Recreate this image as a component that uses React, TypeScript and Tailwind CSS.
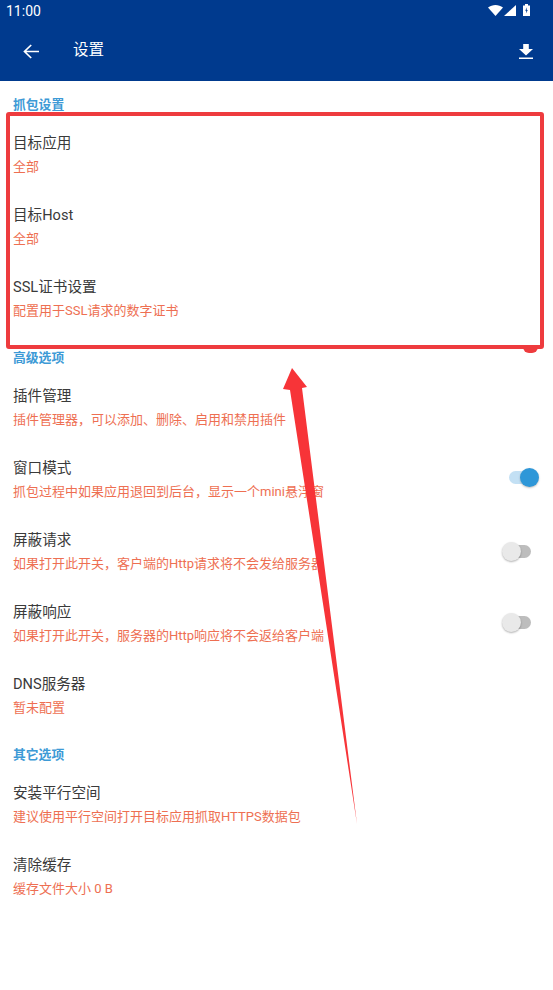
function Toggle({ on }: { on: boolean }) {
    return on ? (
        <div className="relative h-[13px] w-[21px] rounded-full bg-[#c3e0f4]">
            <div className="absolute -right-[9px] -top-[3px] size-[19px] rounded-full bg-[#2e97d8] shadow-[0_1px_2px_rgba(0,0,0,0.25)]"></div>
        </div>
    ) : (
        <div className="relative h-[13px] w-[26px] rounded-full bg-[#bdbdbd]">
            <div className="absolute -left-[3px] -top-[3px] size-[19px] rounded-full bg-[#e9e9e9] shadow-[0_1px_2px_rgba(0,0,0,0.3)]"></div>
        </div>
    )
}

function Row({ title, sub, toggle, toggleClass }: { title: string; sub: string; toggle?: boolean; toggleClass?: string }) {
    return (
        <div className="flex h-[72px] items-center justify-between pl-[13px]">
            <div className="flex flex-col self-start pt-[12px]">
                <div className="h-[24px] text-[14.6px] leading-[24px] text-[#3a3a3a]">{title}</div>
                <div className="h-[24px] text-[13px] leading-[24px] text-[#ee6f52]">{sub}</div>
            </div>
            {toggle !== undefined && (
                <div className={toggleClass}>
                    <Toggle on={toggle} />
                </div>
            )}
        </div>
    )
}

function SectionTitle({ text, className }: { text: string; className: string }) {
    return <div className={`pl-[13px] text-[12.8px] font-bold leading-[28px] text-[#3d9ad6] ${className}`}>{text}</div>
}

export default function App() {
    return (
        <div className="relative h-[990px] w-[553px] overflow-hidden bg-white font-['Roboto','Noto_Sans_CJK_SC',sans-serif]">
            {/* status bar + toolbar */}
            <div className="h-[81px] bg-[#003a8e] text-white">
                <div className="flex h-[20px] items-center justify-between pl-[6px] pr-[23px]">
                    <span className="pt-[2px] text-[14px] leading-[20px]">11:00</span>
                    <div className="flex items-center">
                        <svg width="15" height="11" viewBox="0 0 15 11" fill="white">
                            <path d="M0 2.600C2.200.9 4.800 0 7.500 0s5.300.9 7.500 2.600L7.500 11z" />
                        </svg>
                        <svg width="12" height="11" viewBox="0 0 12 11" fill="white" className="ml-[1px]">
                            <path d="M12 0v11H0z" />
                        </svg>
                        <svg width="7" height="12" viewBox="0 0 7 12" className="ml-[7px]">
                            <path d="M2 0h3v1.400h2V12H0V1.400h2z" fill="white" />
                            <path d="M4 3.200 2.200 6.800h1.100l-.4 2.800 1.900-3.600H3.700z" fill="#003a8e" />
                        </svg>
                    </div>
                </div>
                <div className="flex h-[61px] items-center justify-between pt-[1px] pl-[23px] pr-[20px]">
                    <div className="flex items-center">
                        <svg width="16" height="15" viewBox="0 0 16 15" fill="none" stroke="white" strokeWidth="1.700">
                            <path d="M16 7.500H1.500M8.200 1 1.500 7.500 8.200 14" />
                        </svg>
                        <span className="ml-[34px] text-[15.5px]">设置</span>
                    </div>
                    <svg width="14" height="15" viewBox="0 0 14 15" fill="white">
                        <path d="M4.200 0h5.600v5H14L7 11.500 0 5h4.200zM0 13.500h14V15H0z" />
                    </svg>
                </div>
            </div>

            <SectionTitle text="抓包设置" className="mt-[10px]" />
            <Row title="目标应用" sub="全部" />
            <Row title="目标Host" sub="全部" />
            <Row title="SSL证书设置" sub="配置用于SSL请求的数字证书" />

            <SectionTitle text="高级选项" className="mt-[9px]" />
            <Row title="插件管理" sub="插件管理器，可以添加、删除、启用和禁用插件" />
            <Row title="窗口模式" sub="抓包过程中如果应用退回到后台，显示一个mini悬浮窗" toggle={true} toggleClass="mb-[6px] mr-[23px]" />
            <Row title="屏蔽请求" sub="如果打开此开关，客户端的Http请求将不会发给服务器" toggle={false} toggleClass="mb-[2px] mr-[22px]" />
            <Row title="屏蔽响应" sub="如果打开此开关，服务器的Http响应将不会返给客户端" toggle={false} toggleClass="mb-[4px] mr-[22px]" />
            <Row title="DNS服务器" sub="暂未配置" />

            <SectionTitle text="其它选项" className="mt-[9px]" />
            <Row title="安装平行空间" sub="建议使用平行空间打开目标应用抓取HTTPS数据包" />
            <Row title="清除缓存" sub="缓存文件大小 0 B" />

            {/* red annotation on top of the screenshot */}
            <div className="absolute left-[6px] top-[112px] h-[237px] w-[538px] rounded-[3px] border-[4px] border-[#ee3b3e]"></div>
            <div className="absolute left-[523px] top-[346px] h-[7px] w-[15px] rounded-b-[6px] bg-[#ee3b3e]"></div>
            <svg className="absolute left-0 top-0" width="553" height="990" viewBox="0 0 553 990">
                <path d="M292 368 307 387 302 388 357 824 290 390 283 389z" fill="#f73438" />
            </svg>
        </div>
    )
}
